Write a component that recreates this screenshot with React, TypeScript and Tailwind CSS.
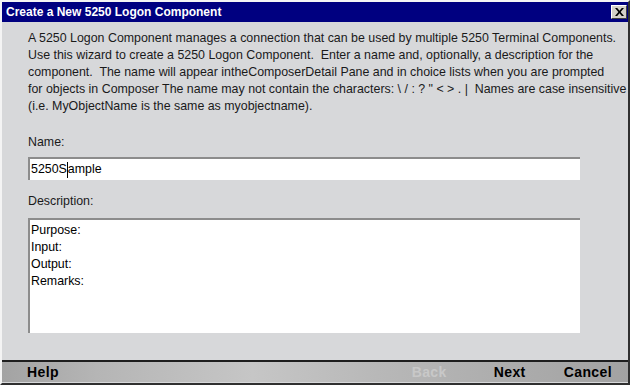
import React from "react";

const font = { fontFamily: '"Liberation Sans", Arial, sans-serif' };

function CloseButton() {
  return (
    <div className="flex h-[14px] w-[16px] items-center justify-center border border-t-white border-l-white border-r-[#404040] border-b-[#404040] bg-[#d4d0c8]">
      <svg width="9" height="8" viewBox="0 0 9 8">
        <path d="M0 0h2.2l2.3 2.7L6.8 0H9L5.6 4 9 8H6.8L4.5 5.3 2.2 8H0l3.4-4z" fill="#000" />
      </svg>
    </div>
  );
}

export default function App() {
  const descLines = ["Purpose:", "Input:", "Output:", "Remarks:"];

  return (
    <div
      className="flex h-[385px] w-[630px] flex-col border-t-2 border-l-2 border-r-2 border-b-2 border-t-[#f4f4f4] border-l-[#f4f4f4] border-r-[#303030] border-b-[#303030] bg-[#d7d8da]"
      style={font}
    >
      <div className="flex h-[20px] items-center justify-between bg-[#000080] pl-[4px] pr-[1px]">
        <span className="text-[12px] font-bold leading-none text-white">
          Create a New 5250 Logon Component
        </span>
        <CloseButton />
      </div>

      <div className="flex flex-1 flex-col pl-[26px] pr-[46px] pt-[8px] text-[12.4px] text-[#1a1a1a]">
        <p className="w-[600px] whitespace-nowrap leading-[17px]">
          A 5250 Logon Component manages a connection that can be used by multiple 5250 Terminal Components.
          <br />
          Use this wizard to create a 5250 Logon Component.&nbsp; Enter a name and, optionally, a description for the
          <br />
          component.&nbsp; The name will appear intheComposerDetail Pane and in choice lists when you are prompted
          <br />
          for objects in Composer The name may not contain the characters: \ / : ? " &lt; &gt; . |&nbsp; Names are case insensitive
          <br />
          (i.e. MyObjectName is the same as myobjectname).
        </p>

        <div className="mt-[19px] leading-[17px]">Name:</div>
        <div className="mt-[6px] flex h-[23px] w-[552px] items-center border-t-2 border-l-2 border-t-[#8c8c8c] border-l-[#8c8c8c] bg-white pl-[1px] text-black">
          <span>5250S</span>
          <span className="h-[16px] w-px bg-black" />
          <span>ample</span>
        </div>

        <div className="mt-[13px] leading-[17px]">Description:</div>
        <div className="mt-[8px] flex h-[115px] w-[552px] flex-col border-t-2 border-l-2 border-t-[#8c8c8c] border-l-[#8c8c8c] bg-white pl-[1px] pt-[2px] leading-[17px] text-black">
          {descLines.map((l) => (
            <span key={l}>{l}</span>
          ))}
        </div>
      </div>

      <div className="mb-[1px] flex h-[22px] items-center border-t-2 border-t-[#1e1e1e] bg-[linear-gradient(90deg,#a3a3a3_0%,#b5b5b5_15%,#c6c6c6_40%,#b8b8b8_60%,#adadad_80%,#a2a2a2_100%)] text-[14px] font-bold tracking-[0.4px]">
        <span className="ml-[25px] text-black">Help</span>
        <span className="ml-auto text-[#c8c8c8]">Back</span>
        <span className="ml-[47px] text-black">Next</span>
        <span className="ml-[38px] mr-[16px] text-black">Cancel</span>
      </div>
    </div>
  );
}
